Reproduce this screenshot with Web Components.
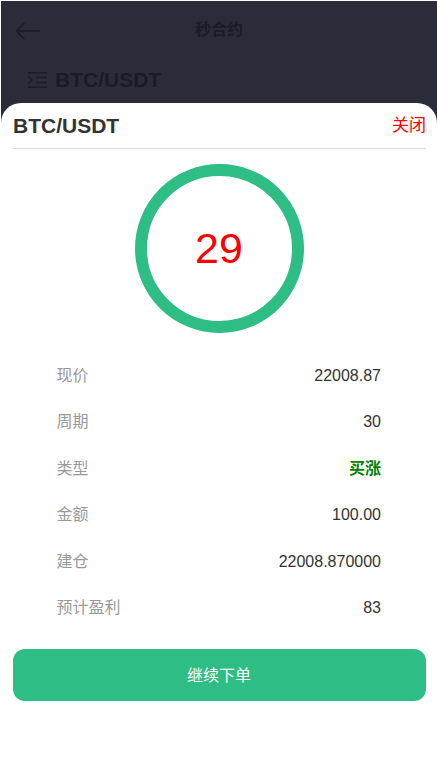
<!DOCTYPE html>
<html lang="zh">
<head>
<meta charset="utf-8">
<title>秒合约</title>
<style>
  html, body { margin: 0; padding: 0; background: #fff; height: 100%; }
  body { font-family: "Liberation Sans", "Noto Sans CJK SC", sans-serif; }
</style>
</head>
<body>
<order-page>
  <order-sheet symbol="BTC/USDT" seconds="29">
    <order-row label="现价">22008.87</order-row>
    <order-row label="周期">30</order-row>
    <order-row label="类型" tone="up">买涨</order-row>
    <order-row label="金额">100.00</order-row>
    <order-row label="建仓">22008.870000</order-row>
    <order-row label="预计盈利">83</order-row>
  </order-sheet>
</order-page>
<script>
(function() {
  'use strict';

  // dimmed trade page behind the sheet
  customElements.define('order-page', class extends HTMLElement {
    constructor() {
      super();
      this.attachShadow({mode: 'open'}).innerHTML = `
      <style>
      :host { display: block; position: relative; width: 437px; height: 776px; overflow: hidden; background: #fff; }
      .back { margin: 1px 0 0 1px; height: 775px; background: #2a2d39; color: #191b27; box-sizing: border-box; }
      .top { display: flex; align-items: center; justify-content: center; position: relative; height: 54px; font-size: 16px; font-weight: bold; }
      .top svg { position: absolute; left: 14px; top: 21px; }
      .sym { display: flex; align-items: center; gap: 8px; padding: 13px 0 0 27px; font-size: 21px; font-weight: bold; }
      </style>
      <div class="back">
        <div class="top">
          <svg width="25" height="18" viewBox="0 0 25 18" fill="none" stroke="#191b27" stroke-width="1.4"><path d="M25 9H1.500M9.500 1 1.500 9 9.500 17"/></svg>
          <span>秒合约</span>
        </div>
        <div class="sym">
          <svg width="19" height="16" viewBox="0 0 19 16" fill="none" stroke="#191b27" stroke-width="1.4"><path d="M0 .8h19M8 5.500h11M8 10.500h11M0 15.200h19M.5 4.500 4 8 .5 11.500"/></svg>
          <span>BTC/USDT</span>
        </div>
      </div>
      <slot></slot>`;
    }
  });

  customElements.define('order-sheet', class extends HTMLElement {
    constructor() {
      super();
      this.attachShadow({mode: 'open'});
    }
    connectedCallback() {
      this.shadowRoot.innerHTML = `
      <style>
      :host { display: block; position: absolute; left: 1px; right: 0; top: 103px; bottom: 0; background: #fff; border-radius: 20px 20px 0 0; padding: 0 11px 0 12px; color: #333; }
      .head { display: flex; align-items: center; justify-content: space-between; height: 45px; border-bottom: 1px solid #dcdee6; }
      .head b { font-size: 21px; }
      .head span { font-size: 17px; color: #f00; padding-bottom: 4px; }
      .ring { box-sizing: border-box; width: 169px; height: 169px; margin: 15px 0 17.800px 121.500px; border: 12px solid #2ebd85; border-radius: 50%; display: flex; align-items: center; justify-content: center; color: #f00; font-size: 43px; }
      .rows { display: flex; flex-direction: column; padding: 0 45px 0 43.500px; }
      button { display: block; width: 100%; height: 52px; margin-top: 19.800px; padding: 0 1px 2px 0; border: 0; border-radius: 12px; background: #2ebd85; color: #fff; font: inherit; font-size: 16px; }
      </style>
      <div class="head"><b>${this.getAttribute('symbol')}</b><span>关闭</span></div>
      <div class="ring">${this.getAttribute('seconds')}</div>
      <div class="rows"><slot></slot></div>
      <button>继续下单</button>`;
    }
  });

  customElements.define('order-row', class extends HTMLElement {
    constructor() {
      super();
      this.attachShadow({mode: 'open'});
    }
    connectedCallback() {
      this.shadowRoot.innerHTML = `
      <style>
      :host { display: flex; align-items: center; justify-content: space-between; height: 46.400px; font-size: 16px; color: #333; }
      .label { color: #999; }
      .val { padding-top: 4px; }
      :host([tone="up"]) .val { color: #008000; font-weight: bold; padding-top: 0; }
      </style>
      <span class="label">${this.getAttribute('label')}</span>
      <span class="val"><slot></slot></span>`;
    }
  });
}());
</script>
</body>
</html>
